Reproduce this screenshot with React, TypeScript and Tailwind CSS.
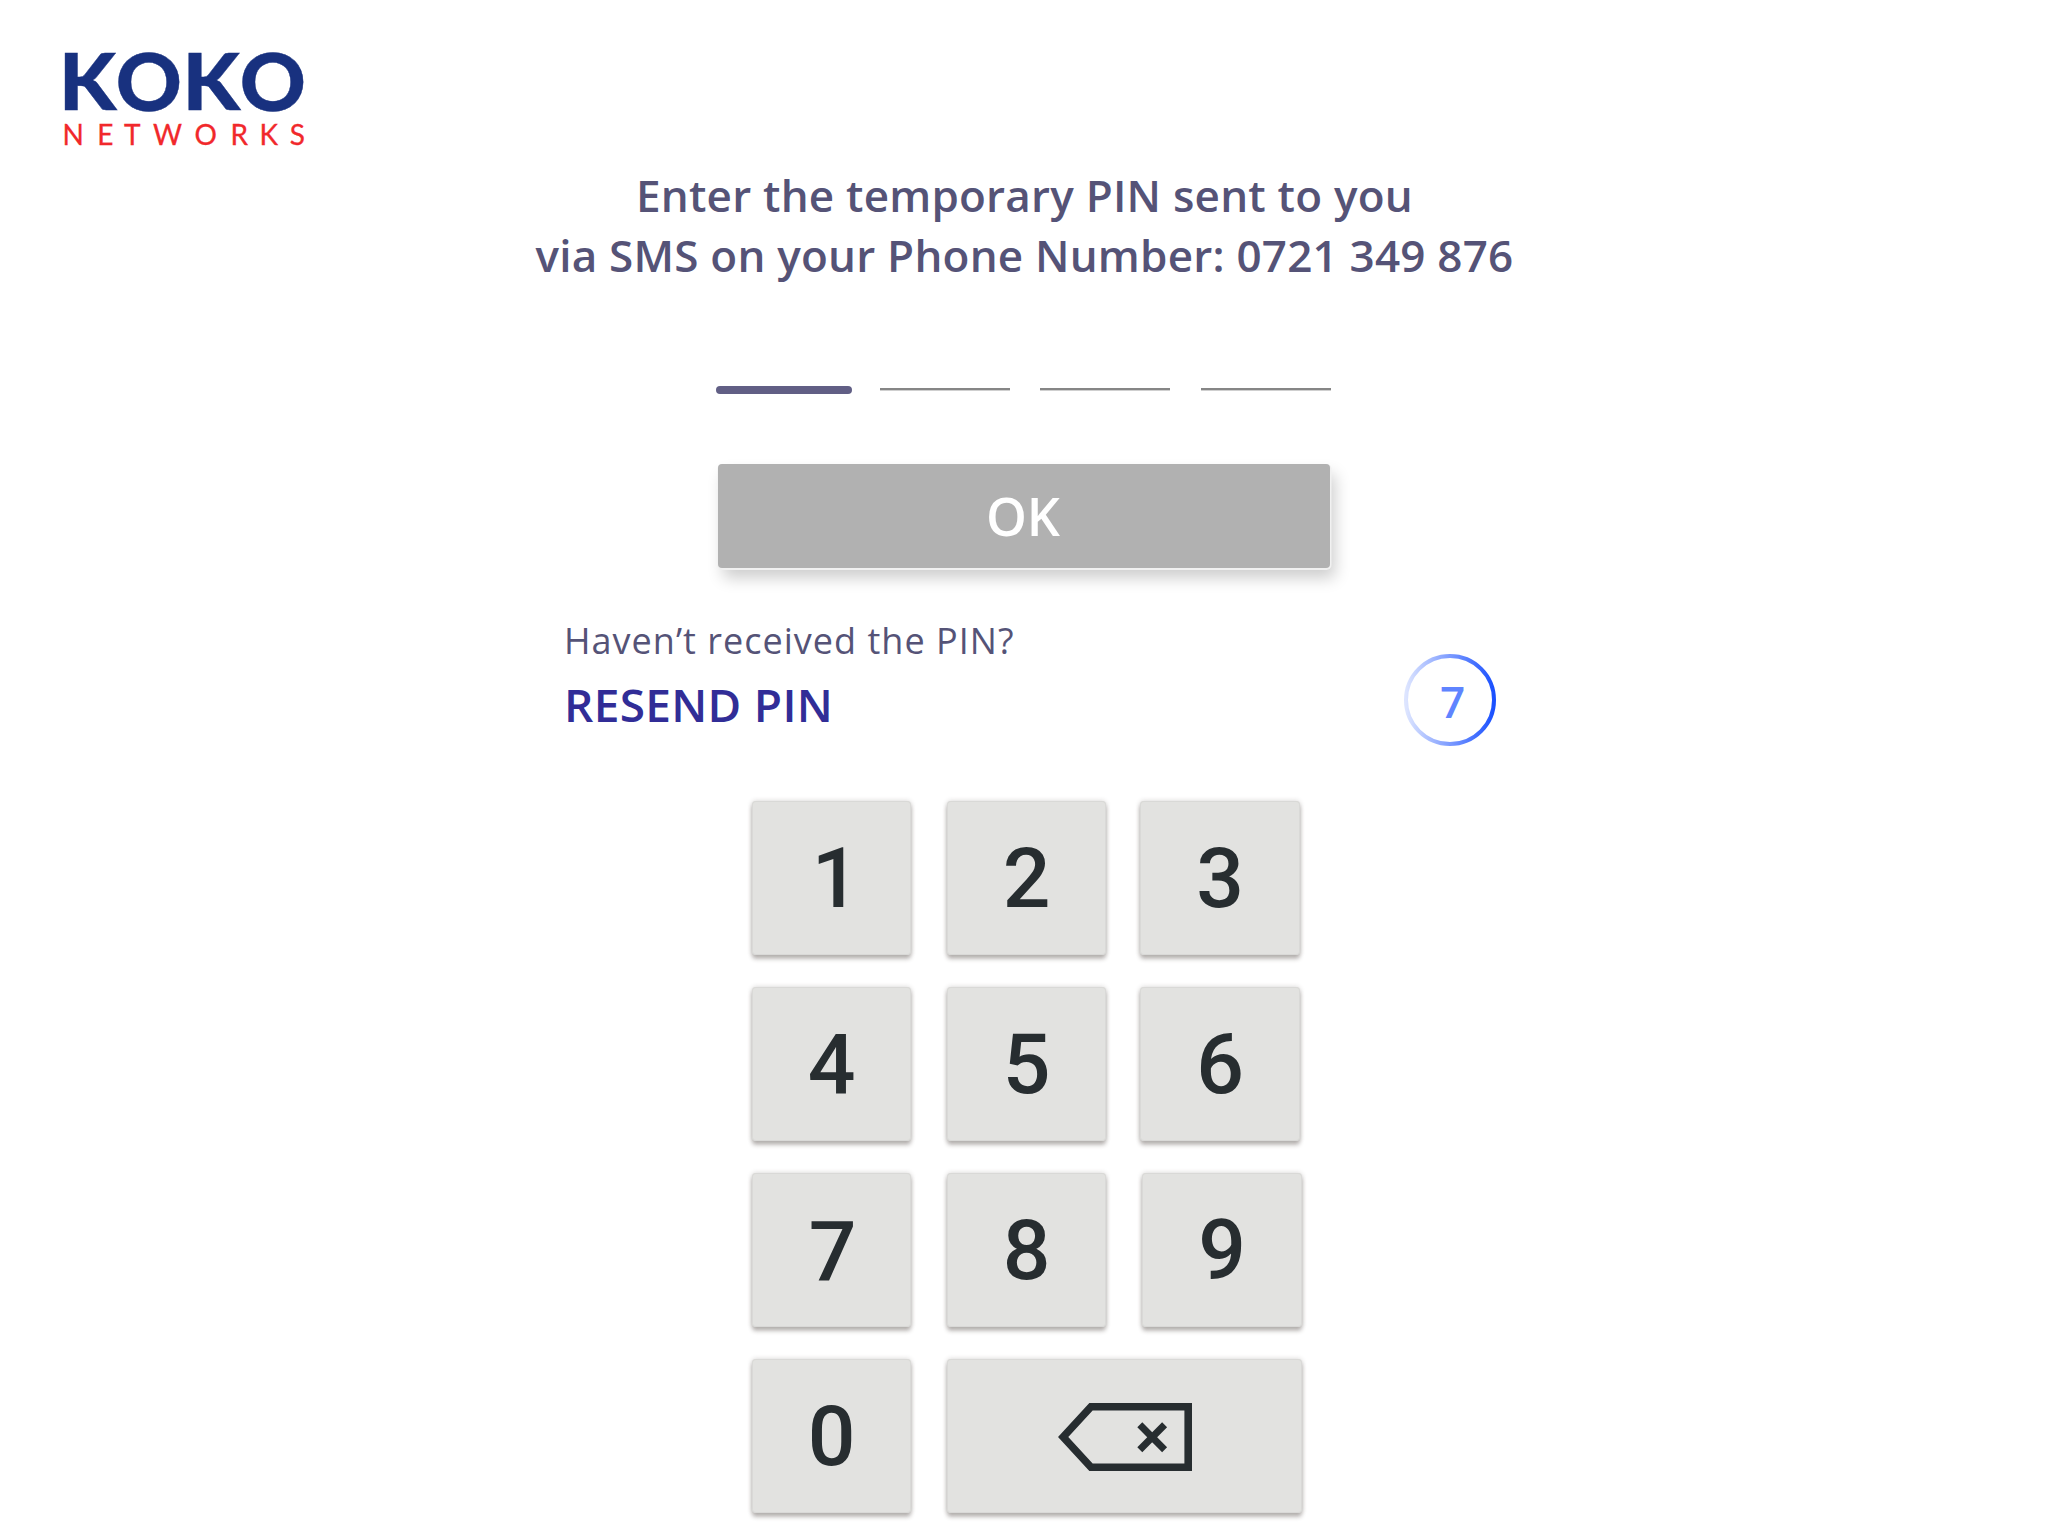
import type { ReactNode } from "react";

function Logo() {
  return (
    <svg
      className="block h-[140px] w-[270px]"
      viewBox="-12 -24 270 140"
      role="img"
      aria-label="KOKO Networks"
    >
      <g fill="#18317f" stroke="#18317f" strokeWidth="0.4" className="font-['Lato',sans-serif] text-[78.5px] font-black">
        <text transform="translate(-3.3 64.3) scale(1.055 1)">K</text>
        <text transform="translate(53.7 64.6) scale(1.04 1.025)">O</text>
        <text transform="translate(120.4 64.3) scale(1.055 1)">K</text>
        <text transform="translate(177.7 64.6) scale(1.04 1.025)">O</text>
      </g>
      <text
        y="99.3"
        x="0.6 35.2 62 91 132.4 168.5 197.6 227.8"
        fill="#f1282b"
        stroke="#f1282b"
        strokeWidth="0.3"
        className="font-['Lato',sans-serif] text-[28px] font-normal"
      >
        NETWORKS
      </text>
    </svg>
  );
}

function Key({ children, className = "w-[159px]" }: { children: ReactNode; className?: string }) {
  return (
    <button
      type="button"
      className={`flex h-[154px] items-center justify-center rounded-[4px] bg-[#e2e2e0] font-['Roboto',sans-serif] text-[84px] leading-[99px] font-medium text-[#272d30] shadow-[inset_0_0_0_1px_#d9d9d7,0_4px_4px_rgba(60,50,45,0.32),0_0_5px_rgba(60,50,45,0.22)] ${className}`}
    >
      {children}
    </button>
  );
}

function BackspaceIcon() {
  return (
    <svg className="ml-[1px] block h-[72px] w-[134px]" viewBox="0 0 134 72" fill="none" stroke="#272d30">
      <path d="M33 6.8H130.2V67.2H33L5.2 37Z" strokeWidth="7.6" />
      <path d="M81.8 24.7L106.6 49.7M106.6 24.7L81.8 49.7" strokeWidth="7" />
    </svg>
  );
}

function Countdown({ value }: { value: number }) {
  return (
    <div className="relative h-[92px] w-[92px]">
      <svg className="block h-full w-full" viewBox="0 0 92 92" fill="none">
        <defs>
          <linearGradient id="ring" x1="0" y1="0" x2="1" y2="0">
            <stop offset="0" stopColor="#dde5ff" />
            <stop offset="1" stopColor="#1a50ff" />
          </linearGradient>
        </defs>
        <circle cx="46" cy="46" r="44" stroke="url(#ring)" strokeWidth="4" />
      </svg>
      <span className="absolute top-[17px] left-[36px] text-[44px] leading-[60px] font-semibold text-[#5f84ff]">
        {value}
      </span>
    </div>
  );
}

export default function App() {
  return (
    <main className="h-[1536px] w-[2048px] overflow-hidden bg-white pt-[22px] font-['Open_Sans','Noto_Sans',sans-serif]">
      <header className="ml-[50px] h-[143px]">
        <Logo />
      </header>

      <h1 className="pl-px text-center text-[44px] leading-[60px] font-semibold tracking-[0.22px] text-[#555377]">
        Enter the temporary PIN sent to you
        <br />
        via SMS on your Phone Number: 0721 349 876
      </h1>

      <div className="mt-[101px] ml-[716px] flex h-[8px] items-start">
        <span className="h-[8px] w-[136px] rounded-[4px] bg-[#615f85]" />
        <span className="mt-[2px] ml-[28px] h-[2px] w-[130px] bg-[#868686] shadow-[0_1px_0_#cfcfcf]" />
        <span className="mt-[2px] ml-[30px] h-[2px] w-[130px] bg-[#868686] shadow-[0_1px_0_#cfcfcf]" />
        <span className="mt-[2px] ml-[31px] h-[2px] w-[130px] bg-[#868686] shadow-[0_1px_0_#cfcfcf]" />
      </div>

      <button
        type="button"
        className="mt-[70px] ml-[718px] block h-[104px] w-[612px] rounded-[4px] bg-[#b1b1b1] pr-[2px] pb-px text-[52px] leading-[71px] font-semibold text-white shadow-[0.5px_1px_0_1px_#f1f1f1,5px_10px_16px_rgba(0,0,0,0.2)]"
      >
        OK
      </button>

      <section className="mt-[48px] ml-[564px] flex h-[185px] w-[932px] justify-between">
        <div>
          <p className="text-[36px] leading-[49px] tracking-[1.02px] text-[#555377]">Haven’t received the PIN?</p>
          <button type="button" className="mt-[8px] block text-[46px] leading-[62px] font-semibold tracking-[0.3px] text-[#312d97]">
            RESEND PIN
          </button>
        </div>
        <div className="mt-[38px]">
          <Countdown value={7} />
        </div>
      </section>

      <section className="ml-[752px] flex flex-col gap-[32px]">
        <div className="flex">
          <Key><span className="relative left-[4px]">1</span></Key>
          <Key className="ml-[36px] w-[159px]">2</Key>
          <Key className="ml-[34px] w-[160px]">3</Key>
        </div>
        <div className="flex">
          <Key>4</Key>
          <Key className="ml-[36px] w-[159px]">5</Key>
          <Key className="ml-[34px] w-[160px]">6</Key>
        </div>
        <div className="flex">
          <Key><span className="relative top-[2px] left-[1px]">7</span></Key>
          <Key className="ml-[36px] w-[159px]">8</Key>
          <Key className="ml-[36px] w-[160px]">9</Key>
        </div>
        <div className="flex">
          <Key>0</Key>
          <Key className="ml-[36px] w-[355px]"><BackspaceIcon /></Key>
        </div>
      </section>
    </main>
  );
}
